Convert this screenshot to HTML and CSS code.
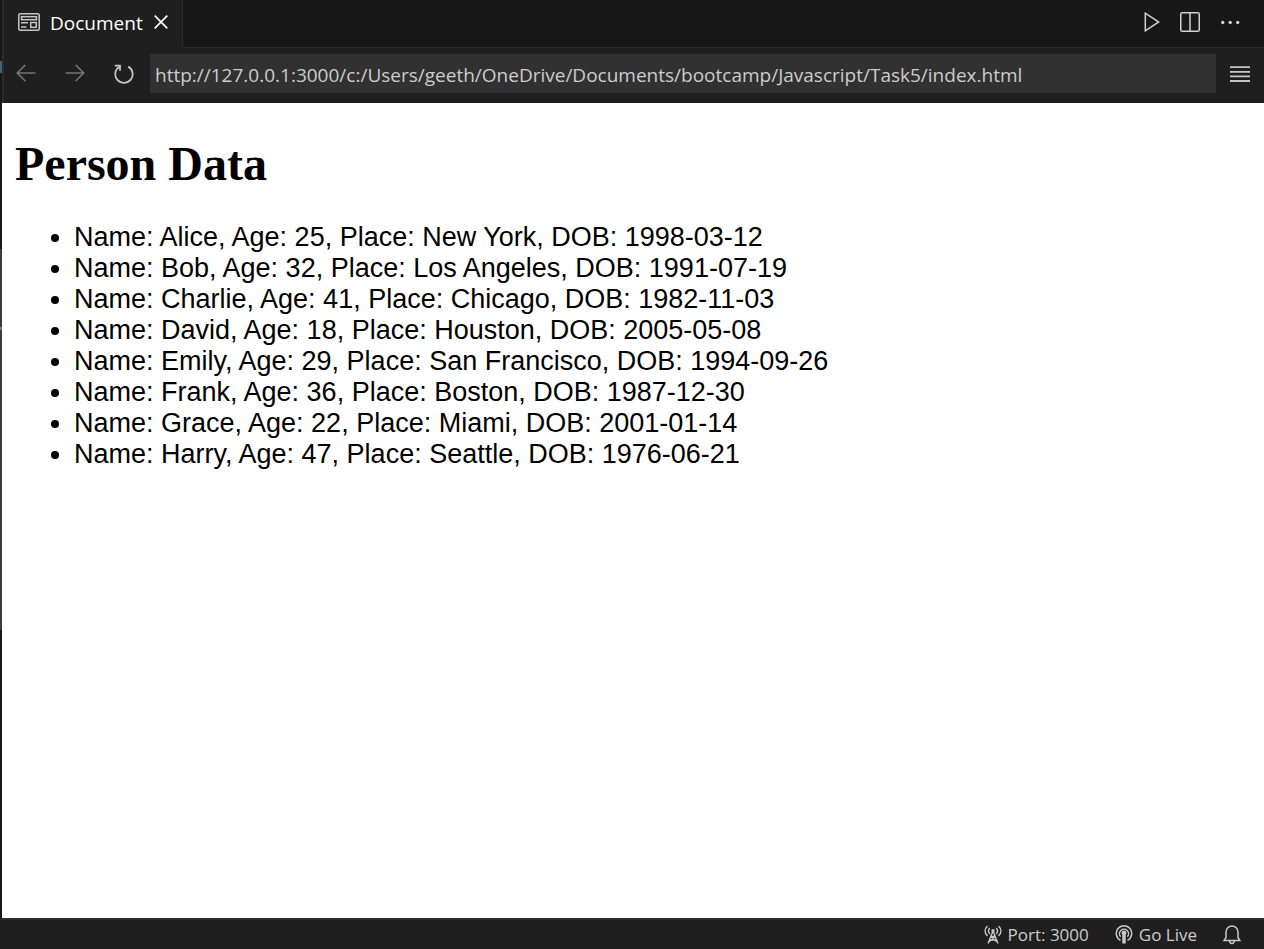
FILE: index.html
```html
<!DOCTYPE html>
<html lang="en">
<head>
<meta charset="utf-8">
<title>Document</title>
<link rel="stylesheet" href="styles.css">
</head>
<body>
<div class="window">
  <div class="edge" aria-hidden="true">
    <span class="edge-mark"></span>
    <span class="edge-scroll"><span class="edge-line"></span></span>
  </div>
  <div class="editor">
    <header class="tabs">
      <div class="tab">
        <svg class="tab-icon" width="22" height="18" viewBox="0 0 22 18" fill="none" stroke="#c5c5c5" stroke-width="1.5"><rect x=".75" y=".75" width="20.5" height="16.5" rx="1.5"/><rect x="3.5" y="3.7" width="15" height="3"/><path d="M3 9.7h7M3 13.9h5.500"/><rect x="12.7" y="9.5" width="5.6" height="4.8"/></svg>
        <span class="tab-title">Document</span>
        <button class="icon-button" aria-label="Close tab"><svg width="14" height="14" viewBox="0 0 14 14" fill="none" stroke="#fff" stroke-width="1.7"><path d="M.7.7l12.6 12.6M13.3.7L.7 13.3"/></svg></button>
      </div>
      <div class="actions">
        <button class="icon-button" aria-label="Run"><svg width="16" height="20" viewBox="0 0 16 20" fill="none" stroke="#d0d0d0" stroke-width="1.5"><path d="M1.3 1.2v17.6L14.7 10z"/></svg></button>
        <button class="icon-button" aria-label="Split editor"><svg width="20" height="20" viewBox="0 0 20 20" fill="none" stroke="#d0d0d0" stroke-width="1.5"><rect x=".75" y=".75" width="18.5" height="18.5" rx="1.3"/><path d="M10 1v18"/></svg></button>
        <button class="icon-button" aria-label="More actions"><svg width="20" height="20" viewBox="0 0 20 20" fill="#d0d0d0"><circle cx="2.7" cy="10.5" r="1.7"/><circle cx="10.2" cy="10.5" r="1.7"/><circle cx="17.7" cy="10.5" r="1.7"/></svg></button>
      </div>
    </header>
    <nav class="toolbar">
      <div class="history">
        <button class="icon-button" aria-label="Back"><svg width="20" height="20" viewBox="0 0 20 20" fill="none" stroke="#757575" stroke-width="1.7"><path d="M19.5 9H1.5M9.3 1L1.3 9l8 8"/></svg></button>
        <button class="icon-button" aria-label="Forward"><svg width="20" height="20" viewBox="0 0 20 20" fill="none" stroke="#757575" stroke-width="1.7"><path d="M.5 9h18M10.7 1l8 8-8 8"/></svg></button>
        <button class="icon-button" aria-label="Reload"><svg width="20" height="20" viewBox="0 0 20 20" fill="none" stroke="#c5c5c5" stroke-width="1.8"><path d="M14.3 2.6A8.700 8.700 0 1 1 5.300 2.800"/><path d="M.8 1.600h5.200v5.200"/></svg></button>
      </div>
      <input class="address" type="text" aria-label="Address" value="http://127.0.0.1:3000/c:/Users/geeth/OneDrive/Documents/bootcamp/Javascript/Task5/index.html">
      <button class="icon-button" aria-label="Menu"><svg width="20" height="18" viewBox="0 0 20 18" stroke="#c5c5c5" stroke-width="1.8"><path d="M0 2.2h20M0 6.8h20M0 11.3h20M0 16h20"/></svg></button>
    </nav>
    <main class="page">
      <h1 class="heading">Person Data</h1>
      <ul class="people">
        <li>Name: Alice, Age: 25, Place: New York, DOB: 1998-03-12</li>
        <li>Name: Bob, Age: 32, Place: Los Angeles, DOB: 1991-07-19</li>
        <li>Name: Charlie, Age: 41, Place: Chicago, DOB: 1982-11-03</li>
        <li>Name: David, Age: 18, Place: Houston, DOB: 2005-05-08</li>
        <li>Name: Emily, Age: 29, Place: San Francisco, DOB: 1994-09-26</li>
        <li>Name: Frank, Age: 36, Place: Boston, DOB: 1987-12-30</li>
        <li>Name: Grace, Age: 22, Place: Miami, DOB: 2001-01-14</li>
        <li>Name: Harry, Age: 47, Place: Seattle, DOB: 1976-06-21</li>
      </ul>
    </main>
  </div>
</div>
<footer class="status">
  <button class="status-item"><svg width="18" height="19" viewBox="0 0 18 19" fill="none" stroke="#c8c8c8" stroke-width="1.4"><path d="M3.5 1C.2 4 .2 8 3.5 11M5.8 3C4 5 4 7 5.8 9M14.5 1c3.300 3 3.300 7 0 10M12.200 3c1.800 2 1.800 4 0 6M9 6L4 18.500M9 6l5 12.500M7 11.500h4M5.500 15h7M7 11.500l5.500 5M11 11.500l-5.500 5"/><circle cx="9" cy="5.800" r="1"/></svg><span>Port: 3000</span></button>
  <button class="status-item"><svg width="18" height="19" viewBox="0 0 18 19" fill="none" stroke="#c8c8c8" stroke-width="1.5"><path d="M5.500 15.300A7.700 7.700 0 1 1 12.500 15.300M5.600 11.700A4.500 4.500 0 1 1 12.400 11.700"/><circle cx="9" cy="8" r="1.700" fill="#c8c8c8"/><path d="M9 10v8.500" stroke-width="3.500"/></svg><span>Go Live</span></button>
  <button class="status-item" aria-label="Notifications"><svg width="18" height="20" viewBox="0 0 18 20" fill="none" stroke="#c8c8c8" stroke-width="1.500"><path d="M1.200 15.500L3 12.500V7a6 6 0 0 1 12 0v5.500l1.800 3zM6.700 16a2.300 2.500 0 0 0 4.600 0"/></svg></button>
</footer>
</body>
</html>
```
FILE: styles.css
```css
* { box-sizing: border-box; }
body {
  margin: 0;
  min-height: 100vh;
  display: flex;
  flex-direction: column;
  background: #1f1f1f;
  color: #ccc;
  font-family: "Segoe UI", "Open Sans", "Noto Sans", sans-serif;
}
button {
  font: inherit;
  color: inherit;
  background: none;
  border: 0;
  padding: 0;
}
svg { display: block; }
.window { flex: 1; display: flex; }
.edge {
  width: 2px;
  background: #181818;
  display: flex;
  flex-direction: column;
}
.edge-mark { height: 12px; margin-top: 61px; background: #42647a; }
.edge-scroll { height: 381px; margin-top: 176px; padding-top: 78px; background: #3c3c3c; }
.edge-line { display: block; height: 3px; background: #7a7a7a; }
.editor { flex: 1; min-width: 0; display: flex; flex-direction: column; }
.tabs {
  height: 48px;
  display: flex;
  justify-content: space-between;
  background: #181818;
  border-left: 2px solid #2b2b2b;
}
.tab {
  display: flex;
  align-items: center;
  padding: 0 14px;
  background: #1f1f1f;
  border-right: 1px solid #2b2b2b;
  color: #fff;
  font-size: 19px;
}
.tab-title { margin: 0 11px 2px 10px; }
.tab .icon-button, .tab-icon { margin-bottom: 4px; }
.actions {
  flex: 1;
  display: flex;
  justify-content: flex-end;
  align-items: center;
  gap: 20px;
  padding: 0 24px 4px 0;
  border-bottom: 1px solid #2b2b2b;
}
.toolbar {
  height: 55px;
  display: flex;
  align-items: center;
  gap: 14px;
  padding: 0 14px 4px 12px;
  border-left: 2px solid #2b2b2b;
}
.history { display: flex; gap: 29px; margin-right: 2px; }
.toolbar > .icon-button { flex: none; }
.history .icon-button { flex: none; }
.address {
  flex: 1;
  min-width: 0;
  height: 39px;
  padding: 2px 5px 0;
  border: 0;
  background: #313131;
  color: #ccc;
  font: 19px "Segoe UI", "Open Sans", "Noto Sans", sans-serif;
}
.page { flex: 1; background: #fff; color: #000; padding: 33px 13px; }
.heading {
  margin: 0 0 30px;
  font: bold 48px/56px "Liberation Serif", "Times New Roman", serif;
}
.people {
  margin: 0;
  padding-left: 59px;
  font: 27px/31px "Liberation Sans", Arial, sans-serif;
}
.status {
  height: 31px;
  display: flex;
  justify-content: flex-end;
  align-items: center;
  gap: 26px;
  padding-right: 23px;
  border-top: 2px solid #2b2b2b;
  font-size: 17px;
}
.status-item { display: flex; align-items: center; gap: 6px; }
```
